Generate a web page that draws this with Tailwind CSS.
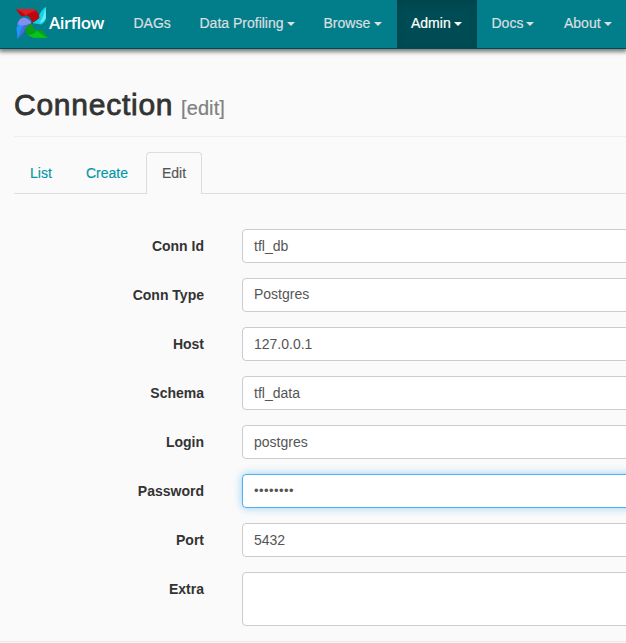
<!DOCTYPE html>
<html lang="en">
<head>
<meta charset="utf-8">
<title>Airflow - Connection</title>
<script src="https://cdn.jsdelivr.net/npm/@tailwindcss/browser@4"></script>
</head>
<body class="h-[643px] overflow-hidden bg-[#fafafa] font-['Liberation_Sans',Arial,sans-serif] text-[14px] leading-5 text-[#333]">
<nav class="flex h-[49px] w-full border-b border-[#004c54] bg-[#017e89] text-[#dcdfe0] shadow-[0_2px_4px_1px_rgba(0,0,0,0.5)] [-webkit-text-stroke:0.2px]">
  <a class="flex w-[118.5px] shrink-0 pl-[15px] pt-[6px] text-white">
    <svg class="h-[34px] w-[33px] shrink-0" viewBox="0 0 33 34">
      <path d="M30.7 .7L31 12Q30 17 26 18.5L17 17Q22 15 23.500 12Q25 5 30.7 .7Z" fill="#12d3e4"/>
      <path d="M30.7 .7L31 12Q29 16 24.500 17.500Q29 10 30.7 .7Z" fill="#58edff"/>
      <path d="M.7 3L18 3Q24 5 24.500 12L17 17Q16 10 11 9.500L6.500 10.500Z" fill="#bd0710"/>
      <path d="M.7 3L18 3L21 5Q14 6 11 9.500Q6 5 .7 3Z" fill="#e41b25"/>
      <path d="M2.700 33L1.500 22Q3 13 8 11.500Q14 11 17 17Q10 20 9 26Z" fill="#4c67df"/>
      <path d="M2.700 33L1.500 22Q3 18 9 18Q4.500 25 2.700 33Z" fill="#199aff"/>
      <path d="M17 17Q12 11 7 12Q3 14 2.500 18.500Q9 21 17 17Z" fill="#7f91ed"/>
      <path d="M32.700 31.700L18 31.700Q10 29 10 22L17 17Q17 23 22 24.500L27 24Z" fill="#0a9f19"/>
      <path d="M32.700 31.700L18 31.700L13 29Q19 29 22 24.500Q28 30 32.700 31.700Z" fill="#08c51b"/>
      <circle cx="17" cy="17" r="1" fill="#225461"/>
    </svg>
    <span class="mt-[6px] ml-px font-['Open_Sans',sans-serif] text-[17px] font-semibold leading-[22px] tracking-[-0.5px] [-webkit-text-stroke:0px]">Airflow</span>
  </a>
  <a class="w-[66px] shrink-0 pt-[13px] pl-[15px]">DAGs</a>
  <a class="flex w-[124px] shrink-0 pt-[13px] pl-[15px]"><span class="w-[87.500px] whitespace-nowrap">Data Profiling</span><i class="mt-[9px] h-0 w-0 border-x-4 border-t-4 border-x-transparent border-t-current"></i></a>
  <a class="flex w-[88.500px] shrink-0 pt-[13px] pl-[15px]"><span class="w-[50px]">Browse</span><i class="mt-[9px] h-0 w-0 border-x-4 border-t-4 border-x-transparent border-t-current"></i></a>
  <a class="flex h-12 w-[80px] shrink-0 bg-[#004c54] pt-[13px] pl-[14px] text-white shadow-[inset_0_3px_8px_rgba(0,0,0,0.13)]"><span class="w-[43px]">Admin</span><i class="mt-[9px] h-0 w-0 border-x-4 border-t-4 border-x-transparent border-t-current"></i></a>
  <a class="flex w-[72px] shrink-0 pt-[13px] pl-[14.500px]"><span class="w-[34.500px]">Docs</span><i class="mt-[9px] h-0 w-0 border-x-4 border-t-4 border-x-transparent border-t-current"></i></a>
  <a class="flex w-[77px] shrink-0 pt-[13px] pl-[15px]"><span class="w-[40px]">About</span><i class="mt-[9px] h-0 w-0 border-x-4 border-t-4 border-x-transparent border-t-current"></i></a>
</nav>
<main>
  <h2 class="ml-[14px] flex h-[88px] items-baseline border-b border-[#eee] pt-[39px] text-[30px] leading-[33px]">
    <span class="w-[167px] tracking-[0.75px] [-webkit-text-stroke:0.8px]">Connection</span><small class="text-[20px] tracking-[0.1px] text-[#808080] [-webkit-text-stroke:0.2px]">[edit]</small>
  </h2>
  <ul class="ml-[14px] mt-[15px] flex h-[42px] border-b border-[#ddd] text-[#0097a7] [-webkit-text-stroke:0.15px]">
    <li class="w-[56px] pl-[16px] pt-[11px]">List</li>
    <li class="w-[76px] pl-[16px] pt-[11px]">Create</li>
    <li class="h-[42px] w-[56px] rounded-t-[4px] border border-b-0 border-[#ddd] bg-[#fafafa] pl-[15px] pt-[10px] text-[#555]">Edit</li>
  </ul>
  <form class="mt-[35px] flex flex-col gap-[15px] text-[#555]">
    <div class="flex h-[34px]"><label class="w-[204px] shrink-0 pt-[7px] text-right font-bold text-[#333]">Conn Id</label><div class="ml-[38px] w-[420px] shrink-0 rounded-[4px] border border-[#ccc] bg-white px-[11px] pt-[6px]">tfl_db</div></div>
    <div class="flex h-[34px]"><label class="w-[204px] shrink-0 pt-[7px] text-right font-bold text-[#333]">Conn Type</label><div class="ml-[38px] w-[420px] shrink-0 rounded-[4px] border border-[#ccc] bg-white px-[11px] pt-[5px]">Postgres</div></div>
    <div class="flex h-[34px]"><label class="w-[204px] shrink-0 pt-[7px] text-right font-bold text-[#333]">Host</label><div class="ml-[38px] w-[420px] shrink-0 rounded-[4px] border border-[#ccc] bg-white px-[11px] pt-[6px]">127.0.0.1</div></div>
    <div class="flex h-[34px]"><label class="w-[204px] shrink-0 pt-[7px] text-right font-bold text-[#333]">Schema</label><div class="ml-[38px] w-[420px] shrink-0 rounded-[4px] border border-[#ccc] bg-white px-[11px] pt-[6px]">tfl_data</div></div>
    <div class="flex h-[34px]"><label class="w-[204px] shrink-0 pt-[7px] text-right font-bold text-[#333]">Login</label><div class="ml-[38px] w-[420px] shrink-0 rounded-[4px] border border-[#ccc] bg-white px-[11px] pt-[6px]">postgres</div></div>
    <div class="flex h-[34px]"><label class="w-[204px] shrink-0 pt-[7px] text-right font-bold text-[#333]">Password</label><div class="ml-[38px] w-[420px] shrink-0 rounded-[4px] border border-[#4fb1f3] bg-white px-[11px] pt-[6px] text-[13px] tracking-[0.45px] shadow-[0_0_8px_rgba(82,178,240,0.6)]">••••••••</div></div>
    <div class="flex h-[34px]"><label class="w-[204px] shrink-0 pt-[7px] text-right font-bold text-[#333]">Port</label><div class="ml-[38px] w-[420px] shrink-0 rounded-[4px] border border-[#ccc] bg-white px-[11px] pt-[6px]">5432</div></div>
    <div class="flex h-[54px]"><label class="w-[204px] shrink-0 pt-[7px] text-right font-bold text-[#333]">Extra</label><div class="ml-[38px] w-[420px] shrink-0 rounded-[4px] border border-[#ccc] bg-white"></div></div>
    <hr class="border-[#e9e9e9]">
  </form>
</main>
</body>
</html>
